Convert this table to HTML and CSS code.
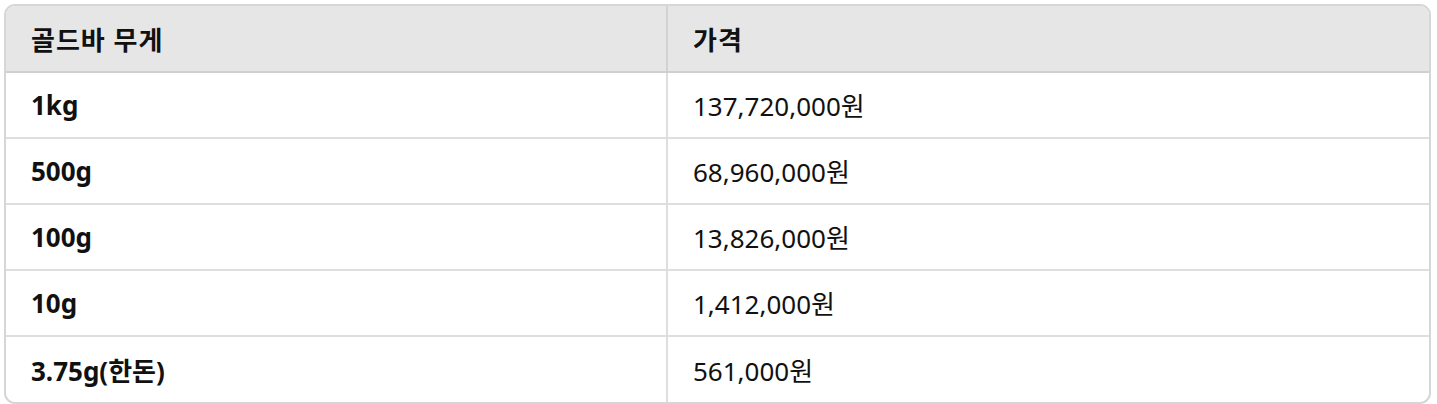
FILE: index.html
```html
<!DOCTYPE html>
<html lang="ko">
<head>
<meta charset="utf-8">
<link rel="stylesheet" href="styles.css">
</head>
<body>
<div class="wrap">
  <table class="price-table">
    <thead>
      <tr><th>골드바 무게</th><th>가격</th></tr>
    </thead>
    <tbody>
      <tr><td class="w">1kg</td><td>137,720,000원</td></tr>
      <tr><td class="w">500g</td><td>68,960,000원</td></tr>
      <tr><td class="w">100g</td><td>13,826,000원</td></tr>
      <tr><td class="w">10g</td><td>1,412,000원</td></tr>
      <tr><td class="w">3.75g(한돈)</td><td>561,000원</td></tr>
    </tbody>
  </table>
</div>
</body>
</html>
```

FILE: styles.css
```css
html, body {
  margin: 0;
  padding: 0;
  background: #ffffff;
}
body {
  padding: 4px 6px 0 4px;
  font-family: "Noto Sans", "Noto Sans CJK KR", sans-serif;
  color: #111;
}
.wrap {
  border: 2px solid #d6d6d6;
  border-radius: 11px;
  overflow: hidden;
}
.price-table {
  width: 100%;
  border-collapse: collapse;
  font-size: 26px;
}
.price-table th,
.price-table td {
  height: 66px;
  padding: 0 0 0 25px;
  text-align: left;
  vertical-align: middle;
  box-sizing: border-box;
  border-bottom: 2px solid #dedede;
}
.price-table th:first-child,
.price-table td:first-child {
  width: 661px;
  border-right: 2px solid #dedede;
}
.price-table thead th {
  background: #e6e6e6;
  font-weight: 700;
  letter-spacing: 1px;
  border-bottom-color: #cfcfcf;
}
.price-table thead th:first-child {
  border-right-color: #d2d2d2;
}
.price-table tbody tr:last-child td {
  border-bottom: none;
}
.price-table td.w {
  font-weight: 700;
}
.price-table td {
  font-weight: 400;
}
```
